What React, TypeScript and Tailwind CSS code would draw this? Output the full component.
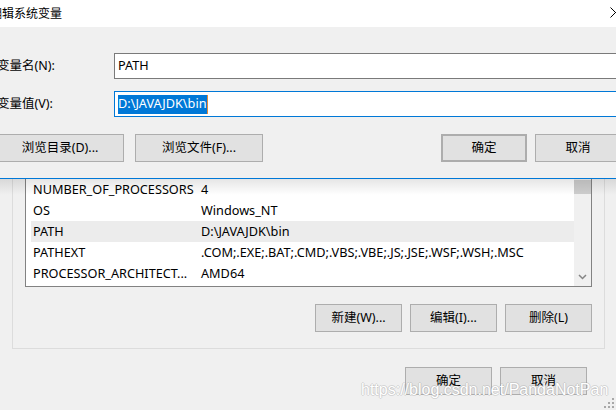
const rows = [
  { name: "NUMBER_OF_PROCESSORS", value: "4" },
  { name: "OS", value: "Windows_NT" },
  { name: "PATH", value: "D:\\JAVAJDK\\bin", selected: true },
  { name: "PATHEXT", value: ".COM;.EXE;.BAT;.CMD;.VBS;.VBE;.JS;.JSE;.WSF;.WSH;.MSC" },
  { name: "PROCESSOR_ARCHITECT...", value: "AMD64" },
];

const font = { fontFamily: '"Noto Sans", "Noto Sans CJK SC", sans-serif' };

function Btn({ label, className = "" }: { label: string; className?: string }) {
  return (
    <div
      className={`flex h-[28px] shrink-0 items-center justify-center border border-[#adadad] bg-[#e1e1e1] text-[12.5px] text-black ${className}`}
    >
      {label}
    </div>
  );
}

export default function App() {
  return (
    <div
      className="relative h-[410px] w-[616px] overflow-hidden bg-[#f0f0f0] text-[12.5px] text-black"
      style={font}
    >
      {/* front dialog */}
      <div className="relative z-10">
        <div className="relative flex h-[27px] items-center bg-white">
          <span className="ml-[-10px] text-[12px] leading-none">编辑系统变量</span>
          <svg className="absolute left-[610px] top-[7px]" width="11" height="11" viewBox="0 0 11 11">
            <path d="M0.5 0.5 L10.5 10.5 M10.5 0.5 L0.5 10.5" stroke="#000" strokeWidth="1" />
          </svg>
        </div>
        <div className="h-[152px] border-b border-[#0078d7] bg-[#f0f0f0] pt-[26px]">
          <div className="flex h-[26px] items-center">
            <span className="ml-[-3px] w-[117px] shrink-0">变量名(N):</span>
            <div className="flex h-[26px] w-[520px] shrink-0 items-center border border-[#7a7a7a] bg-white pl-[3px] text-[12.7px]">
              PATH
            </div>
          </div>
          <div className="mt-[12px] flex h-[26px] items-center">
            <span className="ml-[-3px] w-[117px] shrink-0">变量值(V):</span>
            <div className="flex h-[26px] w-[520px] shrink-0 items-center border border-[#0078d7] bg-white pl-[3px] text-[12.7px]">
              <span className="flex h-[19px] items-center border-r border-[#e08a3a] bg-[#0078d7] text-white">
                D:\JAVAJDK\bin
              </span>
            </div>
          </div>
          <div className="mt-[17px] flex">
            <Btn label="浏览目录(D)..." className="ml-[-4px] w-[128px]" />
            <Btn label="浏览文件(F)..." className="ml-[11px] w-[128px]" />
            <Btn label="确定" className="ml-[178px] w-[86px] border-2 border-[#0078d7]" />
            <Btn label="取消" className="ml-[8px] w-[86px]" />
          </div>
        </div>
      </div>

      {/* drop shadow of front dialog */}
      <div className="pointer-events-none absolute left-0 top-[179px] z-10 h-[16px] w-full bg-gradient-to-b from-black/10 to-transparent" />

      {/* back dialog */}
      <div className="ml-[12px] h-[170px] w-[593px] border-x border-b border-[#dcdcdc] pl-[12px]">
        <div className="flex h-[108px] w-[567px] border-x border-b border-[#828282] bg-white">
          <div className="flex-1 pl-[5px] text-[12.7px]">
            {rows.map((r) => (
              <div
                key={r.name}
                className={`flex h-[21px] items-center pl-[2px] ${r.selected ? "bg-[#ececec]" : ""}`}
              >
                <span className="w-[168px] shrink-0 whitespace-nowrap">{r.name}</span>
                <span className="whitespace-nowrap">{r.value}</span>
              </div>
            ))}
          </div>
          <div className="flex w-[17px] flex-col bg-[#f0f0f0]">
            <div className="mt-[1px] h-[14px] bg-[#cdcdcd]" />
            <div className="flex-1" />
            <svg className="mb-[6px] ml-[4px]" width="9" height="6" viewBox="0 0 9 6">
              <path d="M1 1 L4.5 4.5 L8 1" stroke="#858585" strokeWidth="1.5" fill="none" />
            </svg>
          </div>
        </div>
        <div className="mt-[17px] flex w-[567px] justify-end gap-[8px]">
          <Btn label="新建(W)..." className="w-[87px]" />
          <Btn label="编辑(I)..." className="w-[87px]" />
          <Btn label="删除(L)" className="w-[87px]" />
        </div>
      </div>

      <div className="mt-[18px] flex w-[587px] justify-end gap-[8px]">
        <Btn label="确定" className="w-[87px]" />
        <Btn label="取消" className="w-[87px]" />
      </div>

      {/* watermark */}
      <div
        className="pointer-events-none absolute left-[361px] top-[381px] z-20 whitespace-nowrap text-[16px] leading-[18px] text-white"
        style={{
          fontFamily: '"Liberation Sans", Arial, sans-serif',
          textShadow:
            "1px 0 0 rgba(150,150,150,0.3), -1px 0 0 rgba(150,150,150,0.3), 0 1px 0 rgba(150,150,150,0.3), 0 -1px 0 rgba(150,150,150,0.3)",
        }}
      >
        https://blog.csdn.net/PandaNotPan
      </div>

      {/* size grip */}
      <svg className="absolute bottom-[2px] right-[2px]" width="10" height="10" viewBox="0 0 10 10">
        <g fill="#a8a8a8">
          <rect x="8" y="0" width="2" height="2" />
          <rect x="4" y="4" width="2" height="2" />
          <rect x="8" y="4" width="2" height="2" />
          <rect x="0" y="8" width="2" height="2" />
          <rect x="4" y="8" width="2" height="2" />
          <rect x="8" y="8" width="2" height="2" />
        </g>
      </svg>
    </div>
  );
}
